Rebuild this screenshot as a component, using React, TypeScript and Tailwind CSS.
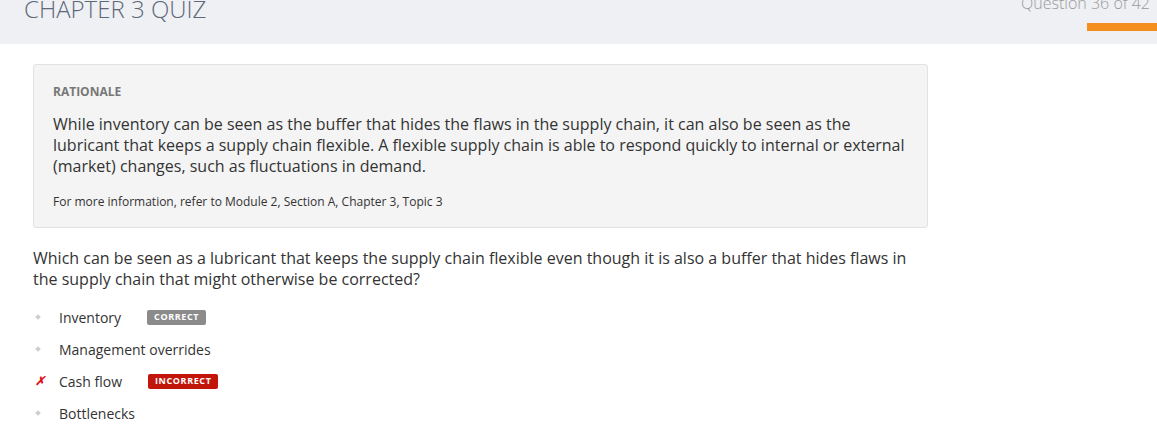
const options = [
  { label: "Inventory", status: "correct" },
  { label: "Management overrides", status: "none" },
  { label: "Cash flow", status: "incorrect" },
  { label: "Bottlenecks", status: "none" },
];

const Badge = ({ kind }: { kind: string }) => {
  if (kind === "correct") {
    return (
      <span className="ml-[26px] inline-flex h-[15px] items-center rounded-[2px] bg-[#8b8b8b] px-[7px] text-[9px] font-bold tracking-[0.6px] text-white">
        CORRECT
      </span>
    );
  }
  if (kind === "incorrect") {
    return (
      <span className="ml-[26px] inline-flex h-[15px] items-center rounded-[2px] bg-[#c3160b] px-[7px] text-[9px] font-bold tracking-[0.6px] text-white">
        INCORRECT
      </span>
    );
  }
  return null;
};

export default function App() {
  return (
    <div className="h-[432px] w-[1157px] overflow-hidden bg-white font-['Open_Sans',sans-serif] text-[#333]">
      {/* header */}
      <div className="flex h-[44px] items-start justify-between bg-[#eff0f4]">
        <div className="ml-[24px] mt-[-5px] text-[24px] font-light leading-[28px] text-[#5d6878]">
          CHAPTER 3 QUIZ
        </div>
        <div className="flex flex-col items-end">
          <div className="mr-[7px] mt-[-7px] text-[16px] font-light leading-[21px] text-[#9a9a9a]">
            Question 36 of 42
          </div>
          <div className="mt-[9px] h-[8px] w-[70px] bg-[#f48f1f]" />
        </div>
      </div>

      <div className="w-[895px] pl-[33px] box-content">
        {/* rationale */}
        <div className="mt-[20px] rounded-[3px] border border-[#e2e2e2] bg-[#f4f4f4] px-[19px] pb-[17px] pt-[18px]">
          <div className="text-[12px] font-bold leading-[17px] text-[#777]">RATIONALE</div>
          <p className="mt-[14px] text-[16px] leading-[21px] text-[#333]">
            While inventory can be seen as the buffer that hides the flaws in the supply chain, it can also be seen as the
            lubricant that keeps a supply chain flexible. A flexible supply chain is able to respond quickly to internal or external
            (market) changes, such as fluctuations in demand.
          </p>
          <p className="mt-[16px] text-[12px] leading-[17px] text-[#333]">
            For more information, refer to Module 2, Section A, Chapter 3, Topic 3
          </p>
        </div>

        {/* question */}
        <p className="mt-[20px] text-[16px] leading-[21px] text-[#333]">
          Which can be seen as a lubricant that keeps the supply chain flexible even though it is also a buffer that hides flaws in
          the supply chain that might otherwise be corrected?
        </p>

        <ul className="mt-[11px] flex flex-col">
          {options.map((o) => (
            <li key={o.label} className="flex h-[32px] items-center text-[14px] text-[#333]">
              <span className="flex w-[26px] items-center pl-[2px]">
                {o.status === "incorrect" ? (
                  <span className="text-[12px] font-bold italic leading-none text-[#e0101a]">✗</span>
                ) : (
                  <span className="ml-[1px] block h-[4px] w-[4px] rotate-45 bg-[#cfcfcf]" />
                )}
              </span>
              <span>{o.label}</span>
              <Badge kind={o.status} />
            </li>
          ))}
        </ul>
      </div>
    </div>
  );
}
